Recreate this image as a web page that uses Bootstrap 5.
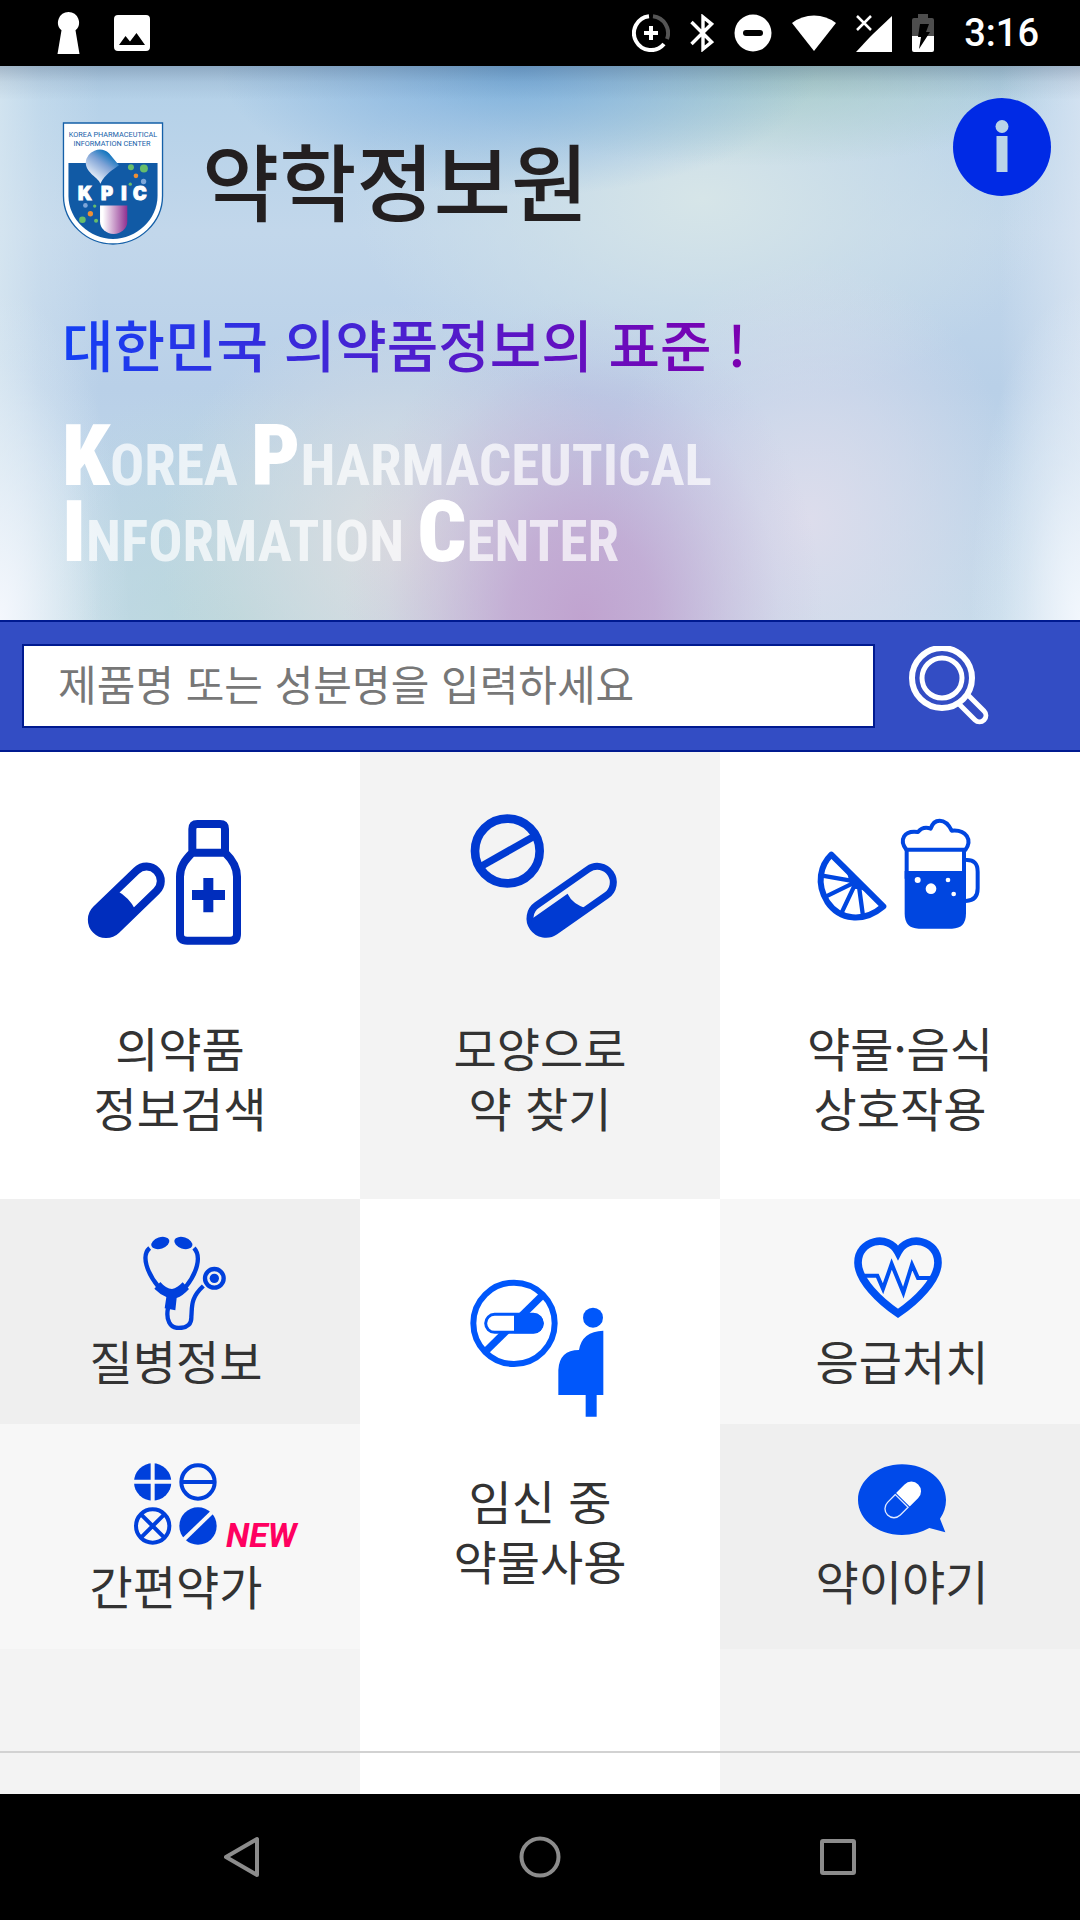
<!DOCTYPE html>
<html lang="ko">
<head>
<meta charset="utf-8">
<meta name="viewport" content="width=device-width, initial-scale=1">
<title>약학정보원</title>
<link href="https://cdn.jsdelivr.net/npm/bootstrap@5.3.0/dist/css/bootstrap.min.css" rel="stylesheet">
<style>
  body { font-family: "Noto Sans CJK KR", "Noto Sans", sans-serif; color: #333; }
  svg { display: block; flex: none; }

  .status-bar { height: 66px; padding: 0 41px 0 57px; }
  .status-left { gap: 34px; }
  .status-right { gap: 20px; }
  .clock { font: 500 38px/38px Roboto, sans-serif; margin-left: 10px; }

  .hero {
    padding: 32px 29px 40px 62px;
    background:
      linear-gradient(180deg, rgba(40,60,90,.26) 0, rgba(40,60,90,.08) 16px, rgba(40,60,90,0) 34px),
      radial-gradient(ellipse 130px 330px at 0 100%, rgba(244,247,253,1), rgba(238,244,250,.55) 45%, rgba(235,243,249,.15) 78%, rgba(235,243,249,0)),
      linear-gradient(90deg, rgba(220,234,242,.7) 0, rgba(220,234,242,.3) 40px, rgba(220,234,242,0) 100px),
      radial-gradient(ellipse 110px 330px at 100% 100%, rgba(242,247,253,1), rgba(236,243,250,.45) 50%, rgba(232,240,249,0)),
      linear-gradient(270deg, rgba(222,232,244,.7) 0, rgba(222,232,244,0) 80px),
      radial-gradient(ellipse 240px 320px at 54% 100%, rgba(192,160,206,.95), rgba(193,163,208,.8) 30%, rgba(195,168,211,.4) 60%, rgba(196,172,216,.12) 82%, rgba(196,176,218,0)),
      radial-gradient(ellipse 210px 260px at 75% 82%, rgba(222,221,236,.95), rgba(222,221,236,.5) 50%, rgba(222,221,236,0)),
      radial-gradient(ellipse 300px 130px at 48% 0, rgba(118,172,220,.95), rgba(130,178,222,.6) 45%, rgba(140,184,224,0)),
      radial-gradient(ellipse 340px 100px at 70% 0, rgba(160,200,190,.75), rgba(170,204,200,0)),
      radial-gradient(ellipse 350px 210px at 65% 24%, rgba(214,229,232,1), rgba(208,225,232,.6) 50%, rgba(200,220,234,0)),
      radial-gradient(ellipse 240px 240px at 37% 86%, rgba(220,221,223,.95), rgba(218,221,224,.5) 50%, rgba(216,220,224,0)),
      radial-gradient(ellipse 260px 240px at 22% 100%, rgba(184,214,218,.9), rgba(184,214,222,0)),
      linear-gradient(180deg, #b2d0e8 0, #c2d7eb 30%, #b9d0e8 58%, #c4daea 100%);
  }
  .brand { gap: 38px; padding-top: 24px; }
  .brand-name { font-size: 84px; line-height: 114px; font-weight: 500; color: #231f20; }
  .info-btn svg { width: 98px; height: 98px; }
  .tagline {
    margin: 58px 0 0; font-size: 56px; line-height: 80px; font-weight: 500; width: fit-content;
    background: linear-gradient(90deg, #1440f4, #4a20d0 48%, #7c00b0);
    -webkit-background-clip: text; background-clip: text; color: transparent;
  }
  .org-en { margin: 45px 0 0; font: 700 57px/76px "Roboto Condensed", sans-serif; color: rgba(255,255,255,.7); }
  .org-en b { font-size: 86px; line-height: 0; color: #fff; }

  .search-band { background: #334dc4; border-top: 2px solid #001a90; border-bottom: 2px solid #001a90; padding: 22px 91px 22px 22px; gap: 34px; }
  .search-box, .search-box:focus { height: 84px; padding: 0 34px 8px; border: 2px solid #001a90; border-radius: 0; font-size: 42px; line-height: 60px; box-shadow: none; color: #333; }
  .search-box::placeholder { color: #777; opacity: 1; }

  .menu-area { background: linear-gradient(90deg, #f3f3f3 33.333%, #fff 33.333%, #fff 66.667%, #f3f3f3 66.667%); }
  .tile { display: flex; flex-direction: column; align-items: center; text-align: center; text-decoration: none; color: #333; font-size: 47px; line-height: 60px; }
  .tile-tall { height: 447px; padding-top: 48px; }
  .tile-mid { padding-top: 54px; }
  .tile-short { height: 225px; padding-top: 20px; }
  .tile-left { padding-right: 8px; }
  .tile-right { padding-left: 4px; }
  .tile-raised { padding-top: 15px; }
  .tile-tall svg, .tile-mid svg { width: 240px; height: 217px; }
  .tile-short svg { width: 240px; height: 111px; }
  .bg-a { background: #f3f3f3; }
  .bg-b { background: #efefef; }
  .bg-c { background: #f7f7f7; }
  .new-tag { left: 226px; top: 91px; font: italic 700 34px/40px Roboto, sans-serif; color: #ff0060; }
  .foot-strip { height: 43px; border-top: 2px solid #d2d2d2; }

  .nav-keys { height: 126px; }
  .nav-keys .btn { width: 27.6%; }
</style>
</head>
<body>
<div class="d-flex flex-column min-vh-100">

  <div class="status-bar bg-black text-white d-flex align-items-center justify-content-between">
    <div class="status-left d-flex align-items-center">
      <svg width="23" height="44" viewBox="0 0 23 44"><path fill="#fff" d="M11.500 1a10.500 10.500 0 0 1 7 18.300L22.500 43H.5L4.500 19.300A10.500 10.500 0 0 1 11.500 1z"/></svg>
      <svg width="36" height="36" viewBox="0 0 36 36"><path fill="#fff" fill-rule="evenodd" d="M4 0h28a4 4 0 0 1 4 4v28a4 4 0 0 1-4 4H4a4 4 0 0 1-4-4V4a4 4 0 0 1 4-4zM5 30h26l-8.500-12-6.500 8.500-4.500-5.500z"/></svg>
    </div>
    <div class="status-right d-flex align-items-center">
      <svg width="38" height="38" viewBox="0 0 38 38" fill="none" stroke-width="4"><path stroke="#555" d="M21 2.200A17 17 0 0 1 35 25"/><path stroke="#fff" d="M17 2.200A17 17 0 1 0 32 30"/><path stroke="#fff" d="M19 12v14M12 19h14"/></svg>
      <svg width="24" height="38" viewBox="0 0 24 38" fill="none" stroke="#fff" stroke-width="3.400"><path d="M1.500 8l20 20L13 35V3l8.500 7-20 20"/></svg>
      <svg width="38" height="38" viewBox="0 0 38 38"><circle cx="19" cy="19" r="18.500" fill="#fff"/><rect x="9" y="16" width="20" height="6" rx="3"/></svg>
      <svg width="44" height="38" viewBox="0 0 44 38"><path fill="#fff" d="M22 37L0 9a36 36 0 0 1 44 0z"/></svg>
      <svg width="36" height="38" viewBox="0 0 36 38"><path fill="#fff" d="M36 2v36H0L14 23l3-3z"/><path stroke="#fff" stroke-width="2.500" d="M1 2l14 14M15 2L1 16"/></svg>
      <svg width="22" height="40" viewBox="0 0 22 40"><path fill="#4d4d4d" d="M6 1h10v4h4a2 2 0 0 1 2 2v16H0V7a2 2 0 0 1 2-2h4z"/><path fill="#fff" d="M0 23h22v14a2 2 0 0 1-2 2H2a2 2 0 0 1-2-2z"/><path d="M8 11h9l-3 8h4L7 36l2-12H6z"/></svg>
      <span class="clock">3:16</span>
    </div>
  </div>

  <header class="hero">
    <div class="d-flex justify-content-between align-items-start">
      <div class="brand d-flex">
        <svg width="102" height="123" viewBox="40 36 304 370" role="img" aria-label="KPIC">
          <defs>
            <linearGradient id="dropFill" x1="1" y1="0" x2=".3" y2="1"><stop offset=".2" stop-color="#0a72bd"/><stop offset=".5" stop-color="#7fa3d6"/><stop offset="1" stop-color="#fff"/></linearGradient>
            <linearGradient id="cupFill" x1="0" x2="1"><stop offset=".1" stop-color="#fff"/><stop offset="1" stop-color="#8f3090"/></linearGradient>
          </defs>
          <path fill="#fff" stroke="#1560a8" stroke-width="4" d="M43 39H341V258C341 340 270 403 192 403S43 340 43 258z"/>
          <path fill="#115aa5" d="M58 159H326V258C326 330 262 388 192 388S58 330 58 258z"/>
          <text x="192" y="80" text-anchor="middle" font-family="Roboto, sans-serif" font-size="22" fill="#1560a8">KOREA PHARMACEUTICAL</text>
          <text x="189" y="108" text-anchor="middle" font-family="Roboto, sans-serif" font-size="22" fill="#1560a8">INFORMATION CENTER</text>
          <path fill="url(#dropFill)" d="M154 222c-4-18-44-32-44-64a42 42 0 0 1 70-28l30 36c-16 12-42 26-56 56z"/>
          <path fill="url(#cupFill)" d="M153 287H235V335a41 38 0 0 1-82 0z"/>
          <g fill="#67bd6b"><circle cx="246" cy="172" r="9"/><circle cx="285" cy="176" r="12"/><circle cx="244" cy="223" r="5"/><circle cx="137" cy="289" r="5"/><circle cx="100" cy="330" r="10"/><circle cx="141" cy="333" r="6"/></g>
          <g fill="#ee8f35"><circle cx="261" cy="198" r="7"/><circle cx="124" cy="312" r="8"/></g>
          <g fill="#7ea6d8"><circle cx="284" cy="215" r="8"/><circle cx="109" cy="287" r="7"/></g>
          <text x="87 156 217 252" y="272" font-family="Inter, sans-serif" font-size="55" font-weight="900" fill="#fff" stroke="#fff" stroke-width="3">KPIC</text>
        </svg>
        <h1 class="brand-name mb-0">약학정보원</h1>
      </div>
      <button type="button" class="info-btn btn p-0 border-0" aria-label="정보">
        <svg viewBox="0 0 98 98"><circle cx="49" cy="49" r="49" fill="#002ae5"/><g fill="#b9d3e8"><circle cx="49" cy="28.500" r="6.500"/><path d="M43.500 38h11v36h-11z"/></g></svg>
      </button>
    </div>
    <p class="tagline">대한민국 의약품정보의 표준 !</p>
    <p class="org-en"><b>K</b>OREA <b>P</b>HARMACEUTICAL<br><b>I</b>NFORMATION <b>C</b>ENTER</p>
  </header>

  <form class="search-band d-flex align-items-center">
    <input type="text" class="search-box form-control" aria-label="제품명 또는 성분명" placeholder="제품명 또는 성분명을 입력하세요">
    <button type="button" class="btn p-0 border-0" aria-label="검색">
      <svg width="80" height="80" viewBox="0 1 80 80" fill="none" stroke="#fff"><circle cx="33" cy="33" r="30" stroke-width="6"/><circle cx="33" cy="33" r="20" stroke-width="5"/><path stroke-width="5" stroke-linejoin="round" d="M49 58L66 75a6 6 0 0 0 9-9L58 49"/></svg>
    </button>
  </form>

  <main class="menu-area flex-grow-1 d-flex flex-column">
    <nav class="row g-0">
      <div class="col-4">
        <a href="#" class="tile tile-tall bg-white">
          <svg viewBox="60 60 720 651" fill="none" stroke="#002dbd" stroke-width="24">
            <g transform="rotate(-44 259 361)"><rect x="132" y="318" width="254" height="86" rx="43"/><path fill="#002dbd" stroke="none" d="M258 318q14 43 0 86H170a43 43 0 0 1 0-86z"/></g>
            <path stroke-linejoin="round" d="M457 218V147q0-15 15-15H540q15 0 15 15V218zM457 218C432 243 420 262 420 290V462q0 20 22 20H570q21 0 21-20V290C591 262 578 240 555 218"/>
            <path stroke-width="30" d="M505 294V397M456 345H555"/>
          </svg>
          <span>의약품<br>정보검색</span>
        </a>
        <a href="#" class="tile tile-short tile-left bg-b">
          <svg viewBox="48 87 720 333" fill="none" stroke="#0040dc" stroke-width="13">
            <g fill="#0040dc" stroke="none"><ellipse cx="361" cy="159" rx="28" ry="17" transform="rotate(-18 361 159)"/><ellipse cx="430" cy="159" rx="28" ry="17" transform="rotate(18 430 159)"/>
            <path d="M343 296L361 276Q378 296 396 297Q412 294 428 277L447 297Q428 318 410 324L406 361L374 355L379 321Q361 314 343 296z"/><circle cx="523" cy="265" r="14"/></g>
            <path d="M329 174C302 197 322 250 356 291M462 174C486 200 470 250 437 291M384 354C377 390 390 414 416 414C445 414 455 400 454 380C457 350 450 325 490 288"/>
            <circle cx="523" cy="265" r="28"/>
          </svg>
          <span>질병정보</span>
        </a>
        <a href="#" class="tile tile-short tile-left bg-c position-relative">
          <svg viewBox="48 762 720 333" fill="none" stroke="#0040dc" stroke-width="12">
            <circle cx="338" cy="876" r="56" fill="#0040dc" stroke="none"/><path stroke="#f7f7f7" d="M338 818V934M280 875H396"/>
            <circle cx="474" cy="876" r="50"/><path d="M424 876H524"/>
            <circle cx="338" cy="1008" r="50"/><path d="M303 973L373 1043M373 973L303 1043"/>
            <circle cx="474" cy="1008" r="56" fill="#0040dc" stroke="none"/><path stroke="#f7f7f7" d="M430 1050L518 965"/>
          </svg>
          <span>간편약가</span>
          <span class="new-tag position-absolute">NEW</span>
        </a>
      </div>

      <div class="col-4">
        <a href="#" class="tile tile-tall bg-a">
          <svg viewBox="0 60 720 651" fill="none" stroke="#003ad2">
            <circle cx="262" cy="213" r="97" stroke-width="26"/><path stroke-width="22" d="M182 260L342 169"/>
            <g transform="rotate(-35 455 361)"><rect x="313" y="313" width="284" height="96" rx="48" stroke-width="21"/><path fill="#003ad2" stroke="none" d="M323 338H456Q450 372 478 408H360a46 46 0 0 1-37-70z"/></g>
          </svg>
          <span>모양으로<br>약 찾기</span>
        </a>
        <a href="#" class="tile tile-mid bg-white">
          <svg viewBox="0 39 720 651" fill="none" stroke="#0057fb">
            <circle cx="282" cy="250" r="122" stroke-width="18"/><path stroke-width="22" d="M195 336L368 165"/>
            <rect x="197" y="223" width="170" height="54" rx="27" fill="#fff" stroke-width="9"/>
            <g fill="#0057fb" stroke="none"><path d="M282 220H341a30 30 0 0 1 0 60H282z"/><circle cx="519" cy="233" r="30"/><path d="M550 272V465H530V530H497V465H415V390Q418 330 477 330Q486 274 550 272z"/></g>
          </svg>
          <span>임신 중<br>약물사용</span>
        </a>
      </div>

      <div class="col-4">
        <a href="#" class="tile tile-tall bg-white">
          <svg viewBox="61 60 720 651" fill="none" stroke="#0046e0" stroke-width="12">
            <path stroke-width="18" stroke-linejoin="round" d="M215 224L371 379C310 430 240 420 203 366C168 310 183 255 215 224z"/>
            <path stroke-width="13" d="M290 305L188 287M290 305L198 350M290 305L245 400M296 305L310 408"/><path fill="#0046e0" stroke="none" d="M260 270L325 335L300 328L280 326L268 300z"/>
            <path stroke-linejoin="round" d="M440 209C418 180 432 150 475 156Q490 138 513 146Q520 122 540 122Q562 122 576 152C620 148 640 180 616 212"/>
            <path d="M441 290V209H613V290z"/><path fill="#0046e0" stroke="none" d="M435 273H619V400q0 46-42 46H477q-42 0-42-46z"/>
            <path d="M619 240Q654 238 654 275V325Q654 362 619 363"/>
            <g fill="#fff" stroke="none"><circle cx="474" cy="300" r="9"/><circle cx="514" cy="326" r="16"/><circle cx="565" cy="300" r="7"/><circle cx="582" cy="342" r="7"/></g>
          </svg>
          <span>약물·음식<br>상호작용</span>
        </a>
        <a href="#" class="tile tile-short tile-right bg-c">
          <svg viewBox="66 87 720 333" fill="none" stroke="#0050f2">
            <path stroke-width="23" d="M414 370C360 334 294 270 294 218C294 150 385 130 414 187C443 130 534 150 534 218C534 270 468 334 414 370z"/>
            <path stroke-width="12" d="M305 257H352L369 296L395 222L430 308L456 224L474 264H520"/>
          </svg>
          <span>응급처치</span>
        </a>
        <a href="#" class="tile tile-short tile-right tile-raised bg-b">
          <svg viewBox="66 747 720 333">
            <path fill="#004aea" d="M426 823C500 823 558 870 558 930Q558 960 540 986L556 1027L508 1014Q470 1035 426 1035C352 1035 294 988 294 930S352 823 426 823z"/>
            <g transform="rotate(-45 428 930)"><path fill="#fff" d="M429 901H465a29 29 0 0 1 0 58H429z"/><path fill="none" stroke="#dfe9ff" stroke-width="4" d="M424 903H391a27 27 0 0 0 0 54H424z"/></g>
          </svg>
          <span>약이야기</span>
        </a>
      </div>
    </nav>
    <div class="foot-strip mt-auto"></div>
  </main>

  <div class="nav-keys bg-black d-flex justify-content-center align-items-center">
    <button type="button" class="btn p-0 border-0 d-flex justify-content-center" aria-label="뒤로"><svg width="36" height="42" viewBox="2 0 36 42"><path fill="none" stroke="#8c8c8c" stroke-width="4" stroke-linejoin="round" d="M35 3V39L4 21z"/></svg></button>
    <button type="button" class="btn p-0 border-0 d-flex justify-content-center" aria-label="홈"><svg width="42" height="42" viewBox="0 0 42 42"><circle cx="21" cy="21" r="18.500" fill="none" stroke="#8c8c8c" stroke-width="4"/></svg></button>
    <button type="button" class="btn p-0 border-0 d-flex justify-content-center" aria-label="최근 앱"><svg width="36" height="36" viewBox="0 0 36 36"><rect x="2" y="2" width="32" height="32" rx="1" fill="none" stroke="#8c8c8c" stroke-width="4"/></svg></button>
  </div>
</div>
<script src="https://cdn.jsdelivr.net/npm/bootstrap@5.3.0/dist/js/bootstrap.bundle.min.js"></script>
</body>
</html>
